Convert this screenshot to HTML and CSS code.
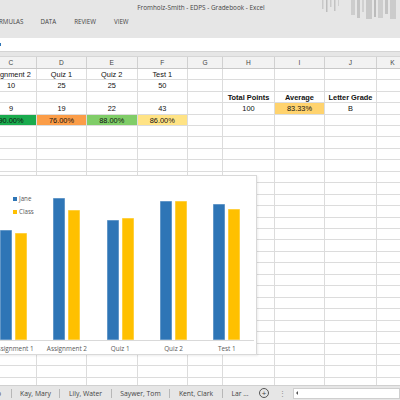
FILE: index.html
```html
<!DOCTYPE html>
<html>
<head>
<meta charset="utf-8">
<link rel="stylesheet" href="styles.css">
</head>
<body>
<div class="app">
  <div class="titlebar">
    <span class="title">Fromholz-Smith - EDPS - Gradebook - Excel</span>
    <svg class="deco" width="80" height="20" viewBox="0 0 80 20">
      <rect x="2" y="0" width="1.5" height="9" fill="#c9c9c9"/>
      <rect x="6" y="0" width="1.5" height="12" fill="#bdbdbd"/>
      <rect x="10" y="0" width="1.5" height="7" fill="#c9c9c9"/>
      <rect x="14" y="0" width="1.5" height="11" fill="#c2c2c2"/>
      <rect x="18" y="0" width="1" height="6" fill="#cfcfcf"/>
      <rect x="31" y="0" width="4" height="15" fill="#cdcdcd"/>
      <rect x="37" y="0" width="3" height="18" fill="#c4c4c4"/>
      <rect x="42" y="0" width="2" height="12" fill="#d0d0d0"/>
      <rect x="46" y="0" width="6" height="19" fill="#c8c8c8"/>
      <rect x="54" y="0" width="2" height="17" fill="#bbbbbb"/>
      <rect x="58" y="0" width="5" height="18" fill="#cdcdcd"/>
      <rect x="65" y="0" width="3" height="14" fill="#c3c3c3"/>
      <rect x="70" y="0" width="6" height="19" fill="#cbcbcb"/>
    </svg>
  </div>
  <div class="ribbon-tabs">
    <span class="rtab cut">RMULAS</span>
    <span class="rtab">DATA</span>
    <span class="rtab">REVIEW</span>
    <span class="rtab">VIEW</span>
  </div>
  <div class="formula"><span class="fmark"></span></div>
  <div class="spacer"></div>
  <div class="colheads">
    <div class="ch c1">C</div><div class="ch">D</div><div class="ch">E</div><div class="ch">F</div><div class="ch g">G</div><div class="ch">H</div><div class="ch">I</div><div class="ch">J</div><div class="ch">K</div><div class="ch"></div>
  </div>
  <div class="sheet">
    <div class="grid">
      <div class="cell c1 left">Assignment 2</div><div class="cell">Quiz 1</div><div class="cell">Quiz 2</div><div class="cell">Test 1</div><div class="cell"></div><div class="cell"></div><div class="cell"></div><div class="cell"></div><div class="cell"></div><div class="cell"></div>
      <div class="cell c1">10</div><div class="cell">25</div><div class="cell">25</div><div class="cell">50</div><div class="cell"></div><div class="cell"></div><div class="cell"></div><div class="cell"></div><div class="cell"></div><div class="cell"></div>
      <div class="cell c1"></div><div class="cell"></div><div class="cell"></div><div class="cell"></div><div class="cell"></div><div class="cell b">Total Points</div><div class="cell b">Average</div><div class="cell b">Letter Grade</div><div class="cell"></div><div class="cell"></div>
      <div class="cell c1">9</div><div class="cell">19</div><div class="cell">22</div><div class="cell">43</div><div class="cell"></div><div class="cell">100</div><div class="cell avg">83.33%</div><div class="cell">B</div><div class="cell"></div><div class="cell"></div>
      <div class="cell c1 f-green">90.00%</div><div class="cell f-orange">76.00%</div><div class="cell f-lgreen">88.00%</div><div class="cell f-yellow">86.00%</div><div class="cell"></div><div class="cell"></div><div class="cell"></div><div class="cell"></div><div class="cell"></div><div class="cell"></div>
      <div class="fill c1"></div><div class="fill"></div><div class="fill"></div><div class="fill"></div><div class="fill"></div><div class="fill"></div><div class="fill"></div><div class="fill"></div><div class="fill"></div><div class="fill"></div>
    </div>

    <div class="chart">
      <div class="legend">
        <div class="lg"><span class="sw jane"></span>Jane</div>
        <div class="lg"><span class="sw class"></span>Class</div>
      </div>
      <div class="plot">
        <div class="cat"><div class="bar jane" style="height:110px"></div><div class="bar class" style="height:107px"></div></div>
        <div class="cat"><div class="bar jane" style="height:142px"></div><div class="bar class" style="height:130px"></div></div>
        <div class="cat"><div class="bar jane" style="height:120px"></div><div class="bar class" style="height:122px"></div></div>
        <div class="cat"><div class="bar jane" style="height:139px"></div><div class="bar class" style="height:139px"></div></div>
        <div class="cat"><div class="bar jane" style="height:136px"></div><div class="bar class" style="height:131px"></div></div>
      </div>
      <div class="labels">
        <span>Assignment 1</span><span>Assignment 2</span><span>Quiz 1</span><span>Quiz 2</span><span>Test 1</span>
      </div>
    </div>
  </div>
  <div class="sheettabs">
    <span class="stab first">o</span>
    <span class="stab w48">Kay, Mary</span>
    <span class="stab w51">Lily, Water</span>
    <span class="stab w58">Saywer, Tom</span>
    <span class="stab w53">Kent, Clark</span>
    <span class="stab last">Lar ...</span>
    <span class="plus">+</span>
    <span class="dots">⋮</span>
    <span class="hscroll"><span class="arrow"></span></span>
  </div>
</div>
</body>
</html>
```

FILE: styles.css
```css
html, body {
  margin: 0;
  padding: 0;
}
body {
  width: 400px;
  height: 400px;
  overflow: hidden;
  background: #e6e6e6;
  font-family: "Liberation Sans", Arial, sans-serif;
  color: #222;
}
.app {
  display: flex;
  flex-direction: column;
  height: 400px;
}
.titlebar {
  height: 15px;
  position: relative;
  display: flex;
  justify-content: center;
  align-items: center;
  font-family: "Open Sans", sans-serif;
  font-size: 6.4px;
  color: #444;
}
.title {
  margin-left: 2px;
}
.deco {
  position: absolute;
  right: 0;
  top: 0;
}
.ribbon-tabs {
  height: 23px;
  display: flex;
  align-items: flex-start;
  padding-top: 3px;
  box-sizing: border-box;
  font-family: "Open Sans", sans-serif;
  font-size: 6.2px;
  color: #444;
}
.rtab {
  margin-right: 18px;
  line-height: 8px;
}
.rtab.cut {
  margin-left: -1px;
  margin-right: 17px;
}
.formula {
  height: 13px;
  background: #fff;
  border-bottom: 1px solid #d4d4d4;
  position: relative;
}
.fmark {
  position: absolute;
  left: 0;
  top: 5px;
  width: 1px;
  height: 3px;
  background: #2e75b6;
}
.spacer {
  height: 4px;
}
.colheads,
.grid {
  display: grid;
  grid-template-columns: 51px 50px 50.5px 50.5px 35px 52px 50px 52px 32px 40px;
  margin-left: -14px;
}
.colheads {
  height: 13px;
  background: #f2f2f2;
  border-top: 1px solid #d6d6d6;
  border-bottom: 1px solid #c8c8c8;
  box-sizing: border-box;
}
.ch {
  border-right: 1px solid #d0d0d0;
  font-size: 6.6px;
  color: #444;
  text-align: center;
  line-height: 11px;
}
.sheet {
  flex: 1;
  position: relative;
  background: #fff;
  overflow: hidden;
}
.grid {
  grid-template-rows: repeat(5, 11.45px) 1fr;
  height: 100%;
}
.cell {
  border-right: 1px solid #dcdcdc;
  border-bottom: 1px solid #dcdcdc;
  font-size: 7.4px;
  line-height: 11px;
  text-align: center;
  white-space: nowrap;
  overflow: hidden;
  color: #111;
}
.cell.left {
  text-align: right;
  padding-right: 6px;
}
.cell.b {
  font-weight: bold;
}
.avg {
  background: #ffd36e;
}
.f-green { background: #1aab4e; }
.f-orange { background: #fb9d48; }
.f-lgreen { background: #80cd68; }
.f-yellow { background: #ffe385; }
.fill {
  border-right: 1px solid #dcdcdc;
  background: repeating-linear-gradient(to bottom, transparent 0, transparent 10.45px, #dcdcdc 10.45px, #dcdcdc 11.45px);
}
.chart {
  position: absolute;
  left: -20px;
  top: 106px;
  width: 277px;
  height: 180px;
  background: #fff;
  border: 1px solid #d9d9d9;
  box-shadow: 1px 1px 2px rgba(0,0,0,0.08);
  box-sizing: border-box;
  display: flex;
  flex-direction: column;
}
.legend {
  position: absolute;
  left: 32px;
  top: 19px;
  font-family: "Open Sans", sans-serif;
  font-size: 6.2px;
  color: #595959;
}
.lg {
  display: flex;
  align-items: center;
  height: 7px;
  margin-bottom: 6px;
}
.sw {
  width: 4px;
  height: 4px;
  margin-right: 2px;
}
.sw.jane { background: #2e75b6; }
.sw.class { background: #ffc000; }
.plot {
  height: 165px;
  margin-left: 6px;
  width: 266.5px;
  display: flex;
  border-bottom: 1px solid #d9d9d9;
  box-sizing: border-box;
}
.cat {
  flex: 1;
  display: flex;
  justify-content: center;
  align-items: flex-end;
  gap: 3px;
}
.bar {
  width: 12px;
  box-shadow: inset 0 0 0 0.5px rgba(255,255,255,0.5);
}
.bar.jane { background: #2e75b6; }
.bar.class { background: #ffc000; }
.labels {
  margin-left: 6px;
  width: 266.5px;
  display: flex;
  padding-top: 3px;
  font-family: "Open Sans", sans-serif;
  font-size: 6.4px;
  color: #595959;
}
.labels span {
  flex: 1;
  text-align: center;
}
.sheettabs {
  height: 15px;
  display: flex;
  align-items: center;
  font-family: "Open Sans", sans-serif;
  font-size: 6.8px;
  color: #444;
  border-top: 1px solid #d0d0d0;
  box-sizing: border-box;
}
.stab {
  border-right: 1px solid #b8b8b8;
  text-align: center;
  line-height: 9px;
  white-space: nowrap;
}
.stab.first { width: 11px; text-align: left; text-indent: -3px; }
.w48 { width: 47px; }
.w51 { width: 51px; }
.w58 { width: 57px; }
.w53 { width: 52px; }
.stab.last { width: 34px; border-right: none; }
.plus {
  width: 8px;
  height: 8px;
  border: 0.8px solid #555;
  border-radius: 50%;
  font-size: 8px;
  line-height: 8px;
  text-align: center;
  margin-left: 2px;
  color: #444;
}
.dots {
  margin-left: 10px;
  color: #888;
  font-size: 7px;
}
.hscroll {
  margin-left: 7px;
  flex: 1;
  height: 9px;
  background: #fff;
  border: 1px solid #cfcfcf;
  position: relative;
}
.arrow {
  position: absolute;
  left: 2px;
  top: 2.5px;
  width: 0;
  height: 0;
  border-top: 2px solid transparent;
  border-bottom: 2px solid transparent;
  border-right: 2px solid #555;
}
```
